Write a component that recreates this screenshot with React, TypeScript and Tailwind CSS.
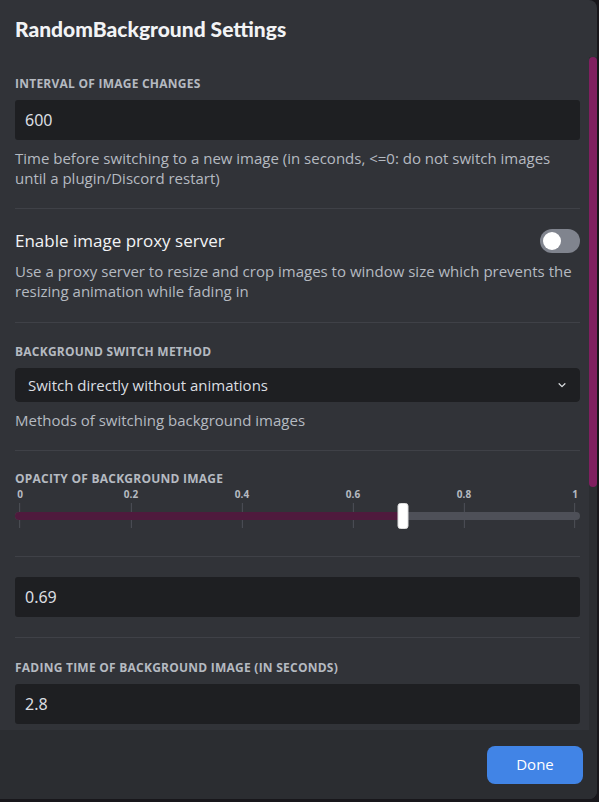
import React from "react";

const ticks = [0, 0.2, 0.4, 0.6, 0.8, 1];
const opacity = 0.69;

const Label = ({ children }: { children: React.ReactNode }) => (
  <h5 className="text-[12px] leading-4 font-bold uppercase tracking-[0.02em] text-[#b5bac1] mb-2">
    {children}
  </h5>
);

const Note = ({ children }: { children: React.ReactNode }) => (
  <p className="mt-2 text-[15px] leading-5 text-[#b5bac1]">{children}</p>
);

const Divider = () => <div className="h-px bg-[#3f4147] my-5" />;

const TextInput = ({ value }: { value: string }) => (
  <div className="h-10 rounded-[3px] bg-[#1e1f22] px-[10px] flex items-center text-[16px] text-[#dbdee1] font-['Noto_Sans',sans-serif]">
    {value}
  </div>
);

const App = () => {
  return (
    <div className="w-[599px] h-[802px] bg-[#18171b] font-['Open_Sans',sans-serif] overflow-hidden">
      <div className="w-[597px] h-[799px] bg-[#313338] rounded-r-lg flex flex-col overflow-hidden">
        {/* header */}
        <div className="h-[57px] shrink-0 flex items-center px-[15px]">
          <h1 className="text-[21px] font-black text-[#f2f3f5] font-['Lato',sans-serif]">
            RandomBackground Settings
          </h1>
        </div>

        {/* scroll area */}
        <div className="flex h-[673px] overflow-hidden">
          <div className="w-[589px] pl-[15px] pr-[9px] pt-[19px]">
            <Label>Interval of image changes</Label>
            <TextInput value="600" />
            <Note>
              Time before switching to a new image (in seconds, &lt;=0: do not switch images until a plugin/Discord restart)
            </Note>
            <Divider />

            <div className="flex items-center justify-between h-6">
              <span className="text-[17px] font-medium text-[#f2f3f5]">Enable image proxy server</span>
              <div className="w-10 h-6 rounded-full bg-[#80848e] flex items-center px-[3px]">
                <div className="w-[18px] h-[18px] rounded-full bg-white" />
              </div>
            </div>
            <Note>
              Use a proxy server to resize and crop images to window size which prevents the resizing animation while fading in
            </Note>
            <div className="h-px bg-[#3f4147] mt-[21px] mb-[21px]" />

            <Label>Background switch method</Label>
            <div className="h-[34px] rounded-[4px] bg-[#1e1f22] border border-[#1e1f22] flex items-center justify-between pl-3 pr-3 text-[15px] text-[#dbdee1]">
              <span>Switch directly without animations</span>
              <svg width="10" height="10" viewBox="0 0 24 24" fill="none" stroke="#dbdee1" strokeWidth="3" strokeLinecap="round" strokeLinejoin="round">
                <path d="M5 9l7 7 7-7" />
              </svg>
            </div>
            <Note>Methods of switching background images</Note>
            <Divider />

            <Label>Opacity of background image</Label>
            <div className="relative h-[49px] -mt-2">
              {ticks.map((t) => (
                <div
                  key={t}
                  className="absolute top-0 flex flex-col items-center -translate-x-1/2"
                  style={{ left: `calc(5px + ${t} * (100% - 10px))` }}
                >
                  <span className="text-[10px] leading-[14px] font-bold text-[#b5bac1]">{t}</span>
                  <div className="mt-[2px] w-px h-[25px] bg-[#4e5058]" />
                </div>
              ))}
              <div className="absolute left-0 right-0 top-[25px] h-2 rounded-full bg-[#4e5058]" />
              <div
                className="absolute left-0 top-[25px] h-2 rounded-l-full bg-[#4f1a3d]"
                style={{ width: `calc(5px + ${opacity} * (100% - 10px))` }}
              />
              <div
                className="absolute top-[16px] w-[11px] h-[26px] rounded-[3px] bg-white -translate-x-1/2 border border-[#dcdcdc]"
                style={{ left: `calc(5px + ${opacity} * (100% - 10px))` }}
              />
            </div>
            <Divider />

            <TextInput value="0.69" />
            <div className="h-px bg-[#3f4147] mt-5 mb-[22px]" />

            <Label>Fading time of background image (in seconds)</Label>
            <TextInput value="2.8" />
            <div className="h-10" />
          </div>
          <div className="w-2 bg-[#2b2d31] flex flex-col">
            <div className="h-[430px] rounded-t-full rounded-b-full bg-[#801f60]" />
          </div>
        </div>

        {/* footer */}
        <div className="flex-1 bg-[#2b2d31] flex items-center justify-end pr-[14px]">
          <button className="w-24 h-[38px] rounded-lg bg-[#4184e6] text-white text-[15px] font-medium">
            Done
          </button>
        </div>
      </div>
    </div>
  );
};

export default App;
